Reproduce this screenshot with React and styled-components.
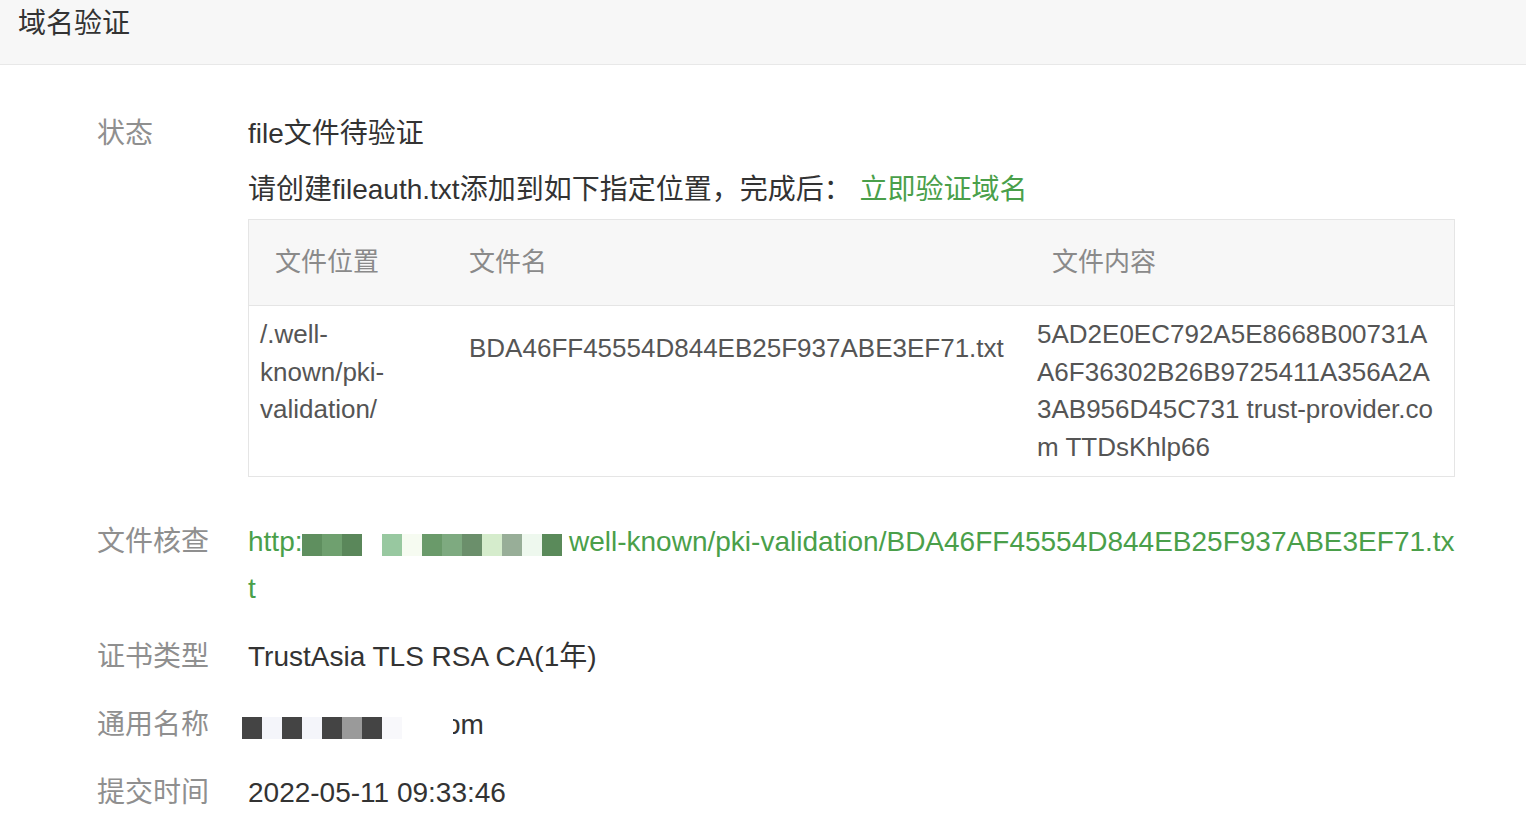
import React from 'react';
import styled, { createGlobalStyle } from 'styled-components';

const GlobalStyle = createGlobalStyle`
  body {
    margin: 0;
    background: #fff;
    color: #333;
    font-family: "Liberation Sans", "Noto Sans CJK SC", sans-serif;
  }
`;

// styles
const Header = styled.div`
  height: 64px;
  background: #f7f7f7;
  border-bottom: 1px solid #e8e8e8;
  padding-left: 18px;
  font-size: 28px;
  line-height: 48px;
  color: #333;
`;

const Content = styled.div`
  display: flex;
  flex-direction: column;
  gap: 21px;
  padding: 45px 0 40px 97px;
`;

const Row = styled.div`
  display: grid;
  grid-template-columns: 151px 1210px;
`;

const Label = styled.div`
  font-size: 28px;
  line-height: 47px;
  color: #8f8f8f;
`;

const Value = styled.div`
  font-size: 28px;
  line-height: 47px;
  color: #333;
  word-break: ${p => (p.$breakAll ? 'break-all' : 'normal')};
`;

const Line = styled.div`
  margin-top: ${p => p.$mt || 0}px;
`;

const Link = styled.span`
  color: #4a9f4a;
  cursor: pointer;
`;

const Table = styled.div`
  box-sizing: border-box;
  width: 1207px;
  margin: 6px 0 20px;
  border: 1px solid #e5e5e5;
  display: grid;
  grid-template-columns: 210px 568px 1fr;
  font-size: 26px;
`;

const HeadCell = styled.div`
  height: 85px;
  display: flex;
  align-items: center;
  padding-left: ${p => p.$pl}px;
  background: #f7f7f7;
  border-bottom: 1px solid #e5e5e5;
  color: #8a8a8a;
`;

const BodyCell = styled.div`
  padding: ${p => p.$pt}px ${p => p.$pr}px 10px ${p => p.$pl}px;
  line-height: 37.5px;
  color: #555;
  word-break: ${p => (p.$breakAll ? 'break-all' : 'normal')};
`;

const Pixel = styled.span`
  display: inline-block;
  width: 20px;
  height: 22px;
  vertical-align: -5px;
  background: ${p => p.$c};
`;

const Blur = styled.span`
  display: inline;
  margin-left: ${p => p.$ml || 0}px;
  margin-right: ${p => p.$mr || 0}px;
`;

const Clip = styled.span`
  display: inline-block;
  width: 31px;
  height: 47px;
  overflow: hidden;
  vertical-align: top;
  margin-left: 51px;
  white-space: nowrap;

  & > span {
    margin-left: -8px;
  }
`;

const urlPixels = [
  '#5f8f5f', '#6fa06f', '#5a875a', '#ffffff', '#98c8a0', '#f6fbf1', '#6a9a6a',
  '#7eaa80', '#6b8f6b', '#d5eccc', '#98ae98', '#eef8ee', '#5a8a5a',
];

const namePixels = [
  '#444', '#f4f5fa', '#444', '#f4f5fa', '#444', '#9a9a9a', '#444', '#f8f8fb',
];

const App = () => {
  return (
    <>
      <GlobalStyle />
      <Header>域名验证</Header>
      <Content>
        <Row>
          <Label>状态</Label>
          <Value>
            <Line>file文件待验证</Line>
            <Line $mt={9}>
              请创建fileauth.txt添加到如下指定位置，完成后： <Link>立即验证域名</Link>
            </Line>
            <Table>
              <HeadCell $pl={26}>文件位置</HeadCell>
              <HeadCell $pl={10}>文件名</HeadCell>
              <HeadCell $pl={25}>文件内容</HeadCell>
              <BodyCell $pt={10} $pr={49} $pl={11}>/.well-known/pki-validation/</BodyCell>
              <BodyCell $pt={24} $pr={10} $pl={10}>BDA46FF45554D844EB25F937ABE3EF71.txt</BodyCell>
              <BodyCell $pt={10} $pr={15} $pl={10} $breakAll>
                5AD2E0EC792A5E8668B00731AA6F36302B26B9725411A356A2A3AB956D45C731 trust-provider.com TTDsKhlp66
              </BodyCell>
            </Table>
          </Value>
        </Row>
        <Row>
          <Label>文件核查</Label>
          <Value $breakAll>
            <Link>
              http:
              <Blur $mr={6.5}>
                {urlPixels.map((c, i) => <Pixel key={i} $c={c} />)}
              </Blur>
              well-known/pki-validation/BDA46FF45554D844EB25F937ABE3EF71.txt
            </Link>
          </Value>
        </Row>
        <Row>
          <Label>证书类型</Label>
          <Value>TrustAsia TLS RSA CA(1年)</Value>
        </Row>
        <Row>
          <Label>通用名称</Label>
          <Value>
            <Blur $ml={-6}>
              {namePixels.map((c, i) => <Pixel key={i} $c={c} />)}
            </Blur>
            <Clip><span>om</span></Clip>
          </Value>
        </Row>
        <Row>
          <Label>提交时间</Label>
          <Value>2022-05-11 09:33:46</Value>
        </Row>
      </Content>
    </>
  );
};

export default App;
